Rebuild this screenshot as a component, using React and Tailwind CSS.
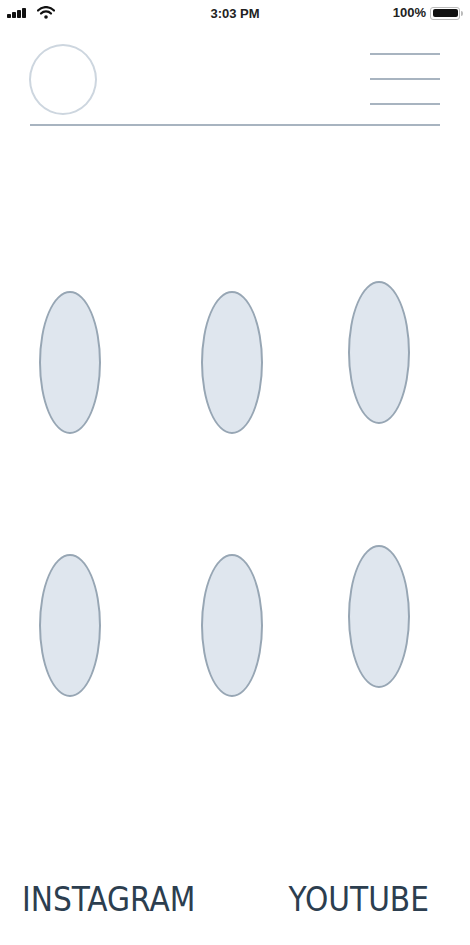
import React from "react";

function Oval({ className = "" }) {
  return (
    <div
      className={`w-[62px] h-[143px] rounded-[50%] border-2 border-[#97a6b4] bg-[#dfe6ee] ${className}`}
    />
  );
}

export default function App() {
  return (
    <div className="w-[470px] h-[945px] bg-white flex flex-col relative overflow-hidden" style={{ fontFamily: "'Open Sans', sans-serif" }}>
      {/* status bar */}
      <div className="h-[25px] flex items-center justify-between px-[7px] relative">
        <div className="flex items-center gap-[10px]">
          <svg width="20" height="10" viewBox="0 0 20 10">
            <rect x="0" y="6" width="4" height="4" rx="0.8" fill="#111" />
            <rect x="5" y="4" width="4" height="6" rx="0.8" fill="#111" />
            <rect x="10" y="2" width="4" height="8" rx="0.8" fill="#111" />
            <rect x="15" y="0" width="4" height="10" rx="0.8" fill="#111" />
          </svg>
          <svg width="18" height="13" viewBox="0 0 18 13">
            <path d="M1 4.5 A11 11 0 0 1 17 4.5" stroke="#111" strokeWidth="2.2" fill="none" strokeLinecap="round" />
            <path d="M4 7.5 A7 7 0 0 1 14 7.5" stroke="#111" strokeWidth="2.2" fill="none" strokeLinecap="round" />
            <circle cx="9" cy="11" r="1.8" fill="#111" />
          </svg>
        </div>
        <div className="absolute left-0 right-0 top-[4px] text-center text-[13px] font-semibold text-[#222]" style={{ fontFamily: "'Liberation Sans', sans-serif" }}>
          3:03 PM
        </div>
        <div className="flex items-center gap-[4px] mt-[1px]">
          <span className="text-[13px] font-semibold text-[#222]" style={{ fontFamily: "'Liberation Sans', sans-serif" }}>100%</span>
          <div className="flex items-center">
            <div className="w-[30px] h-[13px] rounded-[3px] border border-[#bbb] p-[1.5px]">
              <div className="w-full h-full rounded-[2px] bg-[#111]" />
            </div>
            <div className="w-[2px] h-[5px] rounded-r bg-[#bbb] ml-[1px]" />
          </div>
        </div>
      </div>

      {/* header */}
      <div className="px-[30px] mt-[19px]">
        <div className="flex items-start justify-between">
          <div className="w-[68px] h-[71px] rounded-[50%] border-2 border-[#cdd6df] -ml-[1px]" />
          <div className="flex flex-col gap-[23px] mt-[9px]">
            <div className="w-[70px] h-[2px] bg-[#a8b4c0]" />
            <div className="w-[70px] h-[2px] bg-[#a8b4c0]" />
            <div className="w-[70px] h-[2px] bg-[#a8b4c0]" />
          </div>
        </div>
        <div className="h-[2px] bg-[#a8b4c0] mt-[9px]" />
      </div>

      {/* ovals */}
      <div className="flex flex-col gap-[120px] mt-[165px]">
        <div className="flex items-start pl-[39px]">
          <Oval />
          <Oval className="ml-[100px]" />
          <Oval className="ml-[85px] -mt-[10px]" />
        </div>
        <div className="flex items-start pl-[39px]">
          <Oval />
          <Oval className="ml-[100px]" />
          <Oval className="ml-[85px] -mt-[9px]" />
        </div>
      </div>

      {/* footer */}
      <div className="mt-auto mb-[29px] flex justify-between pl-[22px] pr-[41px] text-[#2c3e4f] text-[33px] leading-none" style={{ fontFamily: "'DejaVu Sans Condensed', 'DejaVu Sans', sans-serif" }}>
        <span>INSTAGRAM</span>
        <span>YOUTUBE</span>
      </div>
    </div>
  );
}
